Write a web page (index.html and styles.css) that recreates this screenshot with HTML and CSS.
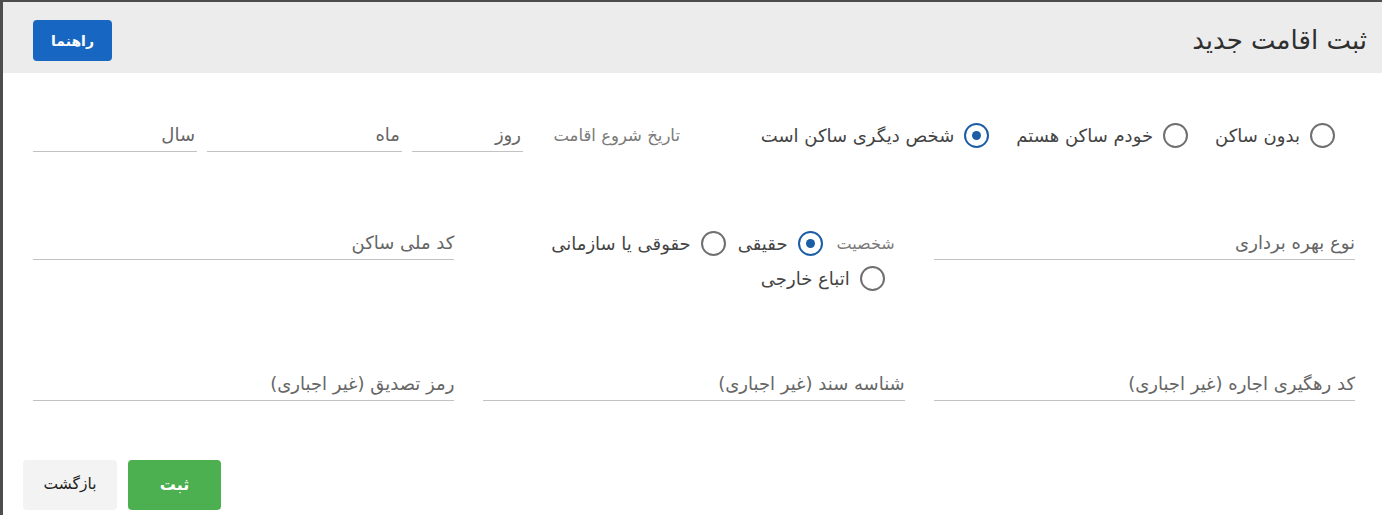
FILE: index.html
```html
<!DOCTYPE html>
<html lang="fa" dir="rtl">
<head>
<meta charset="utf-8">
<title>ثبت اقامت جدید</title>
<link rel="stylesheet" href="styles.css">
</head>
<body>
<div class="modal">
  <header class="modal-head">
    <h1 class="modal-title">ثبت اقامت جدید</h1>
    <button class="btn btn-help" type="button">راهنما</button>
  </header>
  <div class="modal-body">
    <div class="row-first">
      <div class="radio-group resident">
        <label class="radio"><span class="dot"></span><span class="radio-text">بدون ساکن</span></label>
        <label class="radio"><span class="dot"></span><span class="radio-text">خودم ساکن هستم</span></label>
        <label class="radio checked"><span class="dot"></span><span class="radio-text">شخص دیگری ساکن است</span></label>
      </div>
      <div class="date-group">
        <span class="small-label date-label">تاریخ شروع اقامت</span>
        <div class="field day">روز</div>
        <div class="field month">ماه</div>
        <div class="field year">سال</div>
      </div>
    </div>
    <div class="grid">
      <div class="field">نوع بهره برداری</div>
      <div class="person">
        <span class="small-label person-label">شخصیت</span>
        <label class="radio checked"><span class="dot"></span><span class="radio-text">حقیقی</span></label>
        <label class="radio"><span class="dot"></span><span class="radio-text">حقوقی یا سازمانی</span></label>
        <label class="radio"><span class="dot"></span><span class="radio-text">اتباع خارجی</span></label>
      </div>
      <div class="field">کد ملی ساکن</div>
      <div class="field">کد رهگیری اجاره (غیر اجباری)</div>
      <div class="field">شناسه سند (غیر اجباری)</div>
      <div class="field">رمز تصدیق (غیر اجباری)</div>
    </div>
    <div class="actions">
      <button class="btn btn-save" type="button">ثبت</button>
      <button class="btn btn-back" type="button">بازگشت</button>
    </div>
  </div>
</div>
</body>
</html>
```
FILE: styles.css
```css
* { box-sizing: border-box; }
html, body { margin: 0; padding: 0; }
body {
  background: #4d4d4d;
  font-family: "DejaVu Sans", sans-serif;
  direction: rtl;
  height: 515px;
  overflow: hidden;
  line-height: 1.2;
}
.modal {
  margin: 2px 0 0 3px;
  background: #fff;
  height: 513px;
}
.modal-head {
  height: 71px;
  background: #ececec;
  display: flex;
  align-items: center;
  justify-content: space-between;
  padding: 0 15px 0 30px;
}
.modal-title {
  margin: 4px 0 0;
  font-size: 26px;
  line-height: 32px;
  font-weight: normal;
  color: #2f2f2f;
}
.btn {
  border: none;
  font-family: inherit;
  border-radius: 4px;
  cursor: pointer;
  line-height: 1;
}
.btn-help {
  width: 79px;
  height: 41px;
  background: #1766c2;
  color: #fff;
  font-size: 14px;
  font-weight: bold;
  margin-top: 6px;
}
.modal-body {
  padding: 45px 27px 0 30px;
}
.row-first {
  display: flex;
  justify-content: space-between;
  align-items: flex-end;
}
.radio-group.resident {
  display: flex;
  align-items: center;
  height: 34px;
  padding-right: 20px;
  gap: 27px;
}
.radio {
  display: inline-flex;
  align-items: center;
  gap: 10px;
  height: 25px;
  line-height: 25px;
  font-size: 18px;
  color: #444;
  white-space: nowrap;
}
.dot {
  width: 25px;
  height: 25px;
  border: 2px solid #6f6f6f;
  border-radius: 50%;
  display: inline-flex;
  align-items: center;
  justify-content: center;
  flex: none;
}
.radio.checked .dot { border-color: #1b5ea6; }
.radio.checked .dot::after {
  content: "";
  width: 9px;
  height: 9px;
  border-radius: 50%;
  background: #1b5ea6;
}
.small-label {
  font-size: 16px;
  line-height: 25px;
  color: #7a7a7a;
}
.date-group {
  display: flex;
  align-items: center;
  gap: 10px;
  width: 647px;
}
.date-label {
  width: 147px;
  flex: none;
  font-size: 16.5px;
}
.field {
  height: 34px;
  line-height: 34px;
  border-bottom: 1px solid #c2c2c2;
  font-size: 18px;
  color: #666;
  white-space: nowrap;
}
.date-group .field { padding-right: 2px; }
.day { width: 111px; flex: none; }
.month { width: 195px; flex: none; }
.year { flex: 1; }
.grid {
  margin-top: 74px;
  display: grid;
  grid-template-columns: repeat(3, 1fr);
  column-gap: 29px;
  row-gap: 76px;
  align-items: start;
}
.person {
  display: flex;
  flex-wrap: wrap;
  align-items: center;
  padding-right: 10px;
  row-gap: 10px;
  padding-top: 5px;
}
.person-label { margin-left: 14px; }
.person .radio { margin-left: 12px; }
.person .radio:last-child { margin-right: 10px; }
.actions {
  margin-top: 59px;
  margin-left: -10px;
  display: flex;
  justify-content: flex-end;
  gap: 11px;
}
.btn-save {
  width: 93px;
  height: 50px;
  background: #4caf50;
  color: #fff;
  font-size: 16px;
  font-weight: bold;
}
.btn-back {
  width: 94px;
  height: 50px;
  background: #f3f3f3;
  color: #222;
  font-size: 15.5px;
}
```
